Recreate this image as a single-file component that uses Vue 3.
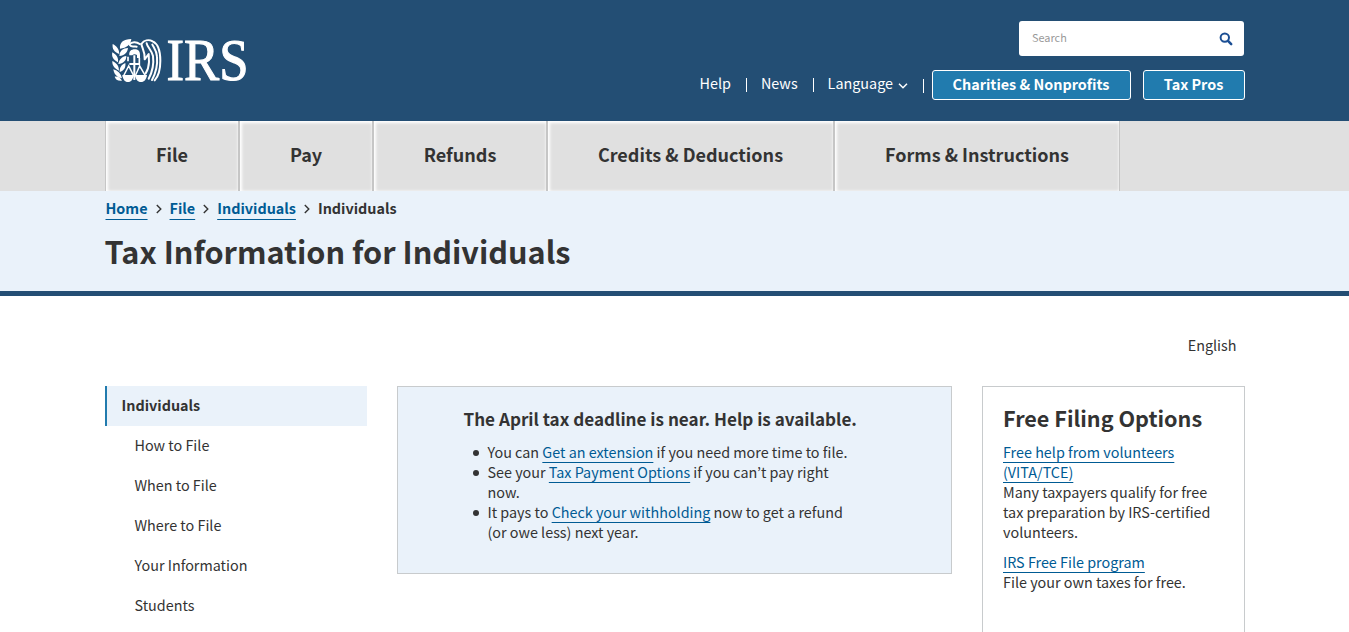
<script setup>
const navItems = [
  { label: 'File', cls: 'w-file' },
  { label: 'Pay', cls: 'w-pay' },
  { label: 'Refunds', cls: 'w-refunds' },
  { label: 'Credits & Deductions', cls: 'w-credits' },
  { label: 'Forms & Instructions', cls: 'w-forms' },
]
const crumbs = ['Home', 'File', 'Individuals']
const sideLinks = ['How to File', 'When to File', 'Where to File', 'Your Information', 'Students']
</script>

<template>
  <div class="page">
    <header class="top">
      <div class="container top-inner">
        <svg class="logo" width="142" height="50" viewBox="0 0 142 50" role="img" aria-label="IRS">
          <g transform="scale(0.33333) translate(-15 -12)">
            <!-- olive branch -->
            <path fill="#fff" d="M60 56C58 38 70 27 94 27C92 44 80 54 60 56ZM58 72C42 66 36 56 38 42C50 48 58 58 58 72ZM58 78C60 62 68 54 84 54C82 68 74 76 58 78ZM54 97C40 90 34 80 37 67C50 74 56 84 54 97ZM55 102C58 87 66 80 79 78C79 92 70 100 55 102ZM57 122C43 115 36 106 37 93C50 99 57 108 57 122ZM59 126C59 112 64 104 76 99C78 112 72 122 59 126ZM66 145C50 142 42 132 40 118C54 122 63 131 66 145ZM66 152C54 154 46 148 44 140C54 139 62 144 66 152Z" />
            <!-- eagle head and scales -->
            <path fill="#fff" d="M88 76C86 64 94 58 104 58C114 58 120 63 120 74V84H111V75C106 72 101 71 97 76Z" />
            <path d="M103 76V150M88 102H120" fill="none" stroke="#fff" stroke-width="6" />
            <path d="M84 80V94M118 84V106" fill="none" stroke="#fff" stroke-width="5" />
            <path d="M86 108L71 137H101ZM119 108L106 137H136Z" fill="none" stroke="#fff" stroke-width="4.500" />
            <path fill="#fff" d="M67 135H101C99 148 94 156 84 156C74 156 69 148 67 135ZM105 135H141C139 148 133 156 123 156C113 156 107 148 105 135Z" />
            <!-- wing -->
            <g fill="none" stroke="#fff" stroke-width="6" stroke-linecap="round" stroke-linejoin="round">
              <path d="M88 43C96 33 111 36 119 42M90 46C94 53 103 48 110 50" />
              <path d="M124 42C132 31 146 28 158 34C176 42 181 62 181 92C181 118 176 138 164 151" />
              <path d="M124 42C126 54 136 66 134 88L146 72L147 96C146 114 141 124 137 130" />
              <path d="M140 40C142 52 156 62 159 78C162 102 158 124 146 146" />
              <path d="M157 44C162 54 170 62 171 80C173 104 168 128 156 150" />
            </g>
          </g>
          <text class="logo-text" x="61.500" y="46.200" textLength="82" lengthAdjust="spacingAndGlyphs">IRS</text>
        </svg>
        <div class="tools">
          <div class="search">
            <span>Search</span>
            <svg width="14" height="14" viewBox="0 0 14 14">
              <circle cx="5.800" cy="5.600" r="4.200" fill="none" stroke="#1c4f94" stroke-width="2" />
              <path d="M9 8.800L12.200 12.200" stroke="#1c4f94" stroke-width="2.500" stroke-linecap="round" />
            </svg>
          </div>
          <div class="util">
            <a class="txt">Help</a>
            <i class="bar"></i>
            <a class="txt">News</a>
            <i class="bar"></i>
            <a class="txt">Language</a>
            <svg class="caret" width="10" height="6" viewBox="0 0 10 6"><path d="M1 0.800L5 4.800L9 0.800" fill="none" stroke="#fff" stroke-width="1.500" /></svg>
            <i class="bar low"></i>
            <a class="btn charities">Charities &amp; Nonprofits</a>
            <a class="btn pros">Tax Pros</a>
          </div>
        </div>
      </div>
    </header>

    <nav class="main-nav">
      <ul class="container">
        <li v-for="n in navItems" :key="n.label" :class="n.cls">{{ n.label }}</li>
      </ul>
    </nav>

    <section class="banner">
      <div class="container">
        <div class="crumbs">
          <template v-for="c in crumbs" :key="c">
            <a>{{ c }}</a>
            <svg width="6" height="10" viewBox="0 0 6 10"><path d="M0.800 1L4.800 5L0.800 9" fill="none" stroke="#333" stroke-width="1.400" /></svg>
          </template>
          <span>Individuals</span>
        </div>
        <h1>Tax Information for Individuals</h1>
      </div>
    </section>

    <div class="container lang-row">English</div>

    <main class="container cols">
      <aside class="side">
        <div class="active">Individuals</div>
        <a v-for="s in sideLinks" :key="s">{{ s }}</a>
      </aside>
      <section class="alert">
        <h2>The April tax deadline is near. Help is available.</h2>
        <ul>
          <li>You can <a>Get an extension</a> if you need more time to file.</li>
          <li>See your <a>Tax Payment Options</a> if you can’t pay right<br>now.</li>
          <li>It pays to <a>Check your withholding</a> now to get a refund<br>(or owe less) next year.</li>
        </ul>
      </section>
      <section class="free">
        <h2>Free Filing Options</h2>
        <p><a>Free help from volunteers<br>(VITA/TCE)</a><br>Many taxpayers qualify for free<br>tax preparation by IRS-certified<br>volunteers.</p>
        <p><a>IRS Free File program</a><br>File your own taxes for free.</p>
      </section>
    </main>
  </div>
</template>

<style>
html, body { overflow: hidden; background: #fff; }
</style>

<style scoped>
.page {
  height: 632px;
  overflow: hidden;
  font-family: "Noto Sans CJK KR", "Noto Sans CJK SC", sans-serif;
  font-size: 14.370px;
  line-height: 20px;
  color: #333;
  white-space: nowrap;
}
.page * { box-sizing: border-box; }
.container { width: 1140px; margin: 0 auto; }
.top { height: 121px; background: #234e74; }
.top-inner { display: flex; justify-content: space-between; }
.logo { margin-top: 34px; display: block; overflow: visible; }
.logo-text {
  font-family: "Liberation Serif", serif;
  font-size: 60px;
  fill: #fff;
  stroke: #fff;
  stroke-width: 1.100;
}
.tools { display: flex; flex-direction: column; align-items: flex-end; }
.search {
  width: 225px;
  height: 35px;
  margin: 21px 1px 0 0;
  padding: 0 11px 2px 13.500px;
  display: flex;
  align-items: center;
  justify-content: space-between;
  background: #fff;
  border-radius: 3px;
  font-size: 10.900px;
  color: #999;
}
.search span { padding-bottom: 1px; }
.search svg { margin-top: 2px; }
.util { height: 30px; margin-top: 14px; display: flex; align-items: center; color: #fff; }
.txt { padding-bottom: 5px; }
.bar { width: 1px; height: 14px; background: #fff; margin: 0 14px 1px 15px; }
.bar.low { margin: 1px 8px 0 14.500px; }
.caret { margin: 2px 0 0 5px; }
.btn {
  height: 30px;
  padding-bottom: 2px;
  display: flex;
  align-items: center;
  justify-content: center;
  background: #217bae;
  border: 1px solid #fff;
  border-radius: 3px;
  font-size: 14.400px;
  font-weight: 700;
}
.charities { width: 199px; }
.pros { width: 102px; margin-left: 12px; }
.main-nav { height: 70px; background: #e0e0e0; }
.main-nav ul { display: flex; padding: 0; list-style: none; }
.main-nav li {
  height: 70px;
  padding-left: 1px;
  line-height: 66px;
  text-align: center;
  font-weight: 700;
  font-size: 18px;
  border: 1px solid #c6c6c6;
  border-width: 0 1px;
  box-shadow: inset 1px 1px 3px 1px #fff;
}
.w-file { width: 134px; }
.w-pay { width: 134px; }
.w-refunds { width: 174px; }
.w-credits { width: 287px; }
.w-forms { width: 286px; }
.banner { height: 105px; background: #eaf2fa; border-bottom: 5px solid #234e74; }
a { color: inherit; }
.crumbs { display: flex; align-items: center; padding: 7px 0 1px 1px; font-weight: 700; }
.crumbs a, .alert a, .free a {
  color: #005b94;
  text-decoration: underline;
  text-decoration-thickness: 1px;
  text-underline-offset: 4px;
  text-decoration-skip-ink: none;
}
.crumbs a { text-underline-offset: 5px; }
.crumbs svg { margin: 2px 8px 0; }
h1 { margin: 12px 0 0; font-size: 30.650px; line-height: 40px; font-weight: 700; }
.lang-row { height: 90px; padding: 39px 8px 0 0; text-align: right; }
.cols { display: flex; align-items: flex-start; }
.side { width: 262px; display: flex; flex-direction: column; line-height: 38px; }
.side .active { height: 40px; padding-left: 15px; border-left: 2px solid #217bae; background: #eaf2fa; font-weight: 700; }
.side a { height: 40px; padding-left: 30px; }
.alert { width: 555px; height: 188px; margin-left: 30px; border: 1px solid #c8cbcd; background: #eaf2fa; }
.alert h2 { margin: 21px 0 0 66px; font-size: 17.100px; line-height: 22px; }
.alert ul { margin: 12px 0 0; padding: 0 0 0 90px; list-style: none; }
.alert li { position: relative; }
.alert li::before {
  content: "";
  position: absolute;
  left: -14.500px;
  top: 8px;
  width: 6px;
  height: 6px;
  border-radius: 50%;
  background: #333;
}
.free { width: 263px; height: 300px; margin-left: 30px; padding: 16px 20px 0 20.500px; border: 1px solid #c8cbcd; }
.free h2 { margin: 0 0 9px; font-size: 21.600px; line-height: 30px; }
.free p { margin: 0 0 10px; }
</style>
